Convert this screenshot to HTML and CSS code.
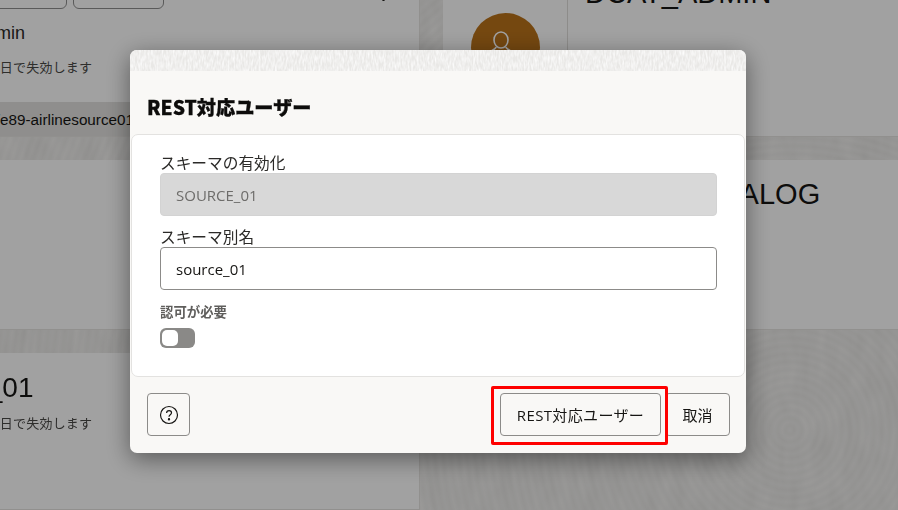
FILE: index.html
```html
<!DOCTYPE html>
<html lang="ja">
<head>
<meta charset="utf-8">
<title>REST対応ユーザー</title>
<link rel="stylesheet" href="styles.css">
</head>
<body>
<svg class="texture" width="898" height="510" aria-hidden="true">
  <filter id="page-grain" x="0" y="0" width="100%" height="100%">
    <feTurbulence type="fractalNoise" baseFrequency=".07 .03" numOctaves="2" seed="4"/>
    <feColorMatrix values="0 0 0 0 0  0 0 0 0 0  0 0 0 0 0  .06 0 0 0 -.012"/>
  </filter>
  <rect width="898" height="510" filter="url(#page-grain)"/>
</svg>
<main class="grid">
  <section class="card card-a">
    <div class="actions">
      <span class="ghost ghost-one"></span>
      <span class="ghost ghost-two"></span>
      <span class="kebab"></span>
    </div>
    <div class="name">Admin</div>
    <div class="expiry">90日で失効します</div>
    <div class="url">https://adb.example/ords/e89-airlinesource01</div>
  </section>
  <section class="card card-user">
    <div class="side">
      <span class="avatar">
        <svg viewBox="0 0 69 69" width="69" height="69" fill="none" stroke="#fff" stroke-width="1.600">
          <ellipse cx="30" cy="27" rx="7" ry="8"/>
          <path d="M25 34c0 3-9 4-11 11M35 34c0 3 9 4 11 11"/>
        </svg>
      </span>
    </div>
    <div class="title title-top">DCAT_ADMIN</div>
  </section>
  <section class="card card-plain"></section>
  <section class="card card-user">
    <div class="side"></div>
    <div class="title title-mid">DBMS_CATALOG</div>
  </section>
  <section class="card card-bottom">
    <div class="big">SOURCE_01</div>
    <div class="expiry">90日で失効します</div>
  </section>
  <div class="empty"></div>
</main>

<div class="scrim"></div>

<div class="dialog" role="dialog" aria-labelledby="dlg-title">
  <div class="dialog-strip">
    <svg width="616" height="21" aria-hidden="true">
      <filter id="strip-grain" x="0" y="0" width="100%" height="100%">
        <feTurbulence type="fractalNoise" baseFrequency=".55 .16" numOctaves="2" seed="9"/>
        <feColorMatrix values="0 0 0 0 1  0 0 0 0 1  0 0 0 0 1  1.500 0 0 0 -.45"/>
      </filter>
      <rect width="616" height="21" filter="url(#strip-grain)"/>
    </svg>
  </div>
  <h1 class="dialog-title" id="dlg-title">REST対応ユーザー</h1>
  <form class="panel">
    <label class="field-label">スキーマの有効化</label>
    <div class="input input-off">SOURCE_01</div>
    <label class="field-label field-gap">スキーマ別名</label>
    <div class="input">source_01</div>
    <div class="small-label">認可が必要</div>
    <span class="toggle"><span class="knob"></span></span>
  </form>
  <footer class="dialog-foot">
    <button class="btn btn-help" type="button" aria-label="ヘルプ">
      <svg viewBox="0 0 20 20" width="20" height="20" fill="none" stroke="#161513" stroke-width="1.200">
        <circle cx="10" cy="10" r="8.500"/>
        <path d="M7.600 8c0-1.500 1.100-2.400 2.500-2.400s2.400.9 2.400 2.200c0 1.900-2.500 1.900-2.500 3.900"/>
        <circle cx="10" cy="14.300" r=".6" fill="#161513"/>
      </svg>
    </button>
    <div class="foot-right">
      <button class="btn btn-rest" type="button">REST対応ユーザー</button>
      <button class="btn btn-cancel" type="button">取消</button>
    </div>
  </footer>
</div>

<div class="callout"></div>
</body>
</html>
```

FILE: styles.css
```css
* { box-sizing: border-box; }

html, body {
  margin: 0;
  height: 100%;
  overflow: hidden;
}

body {
  font-family: "Liberation Sans", "Noto Sans CJK JP", sans-serif;
  color: #161513;
  background-color: #f3f2f0;
  background-image:
    repeating-radial-gradient(circle at 790px 430px, rgba(0,0,0,0) 0, rgba(0,0,0,.018) 4px, rgba(0,0,0,0) 8px);
}

.texture {
  position: fixed;
  left: 0;
  top: 0;
  z-index: -1;
}

.grid {
  display: grid;
  grid-template-columns: 420px 455px;
  grid-template-rows: 237px 170px 157px;
  column-gap: 23px;
  row-gap: 23px;
  margin-top: -100px;
}

.card {
  background: #fff;
  overflow: hidden;
  border-bottom: 1px solid #e6e4e1;
}

.card-a,
.card-plain,
.card-bottom {
  border-right: 1px solid #e6e4e1;
}

.actions {
  display: flex;
  align-items: flex-end;
  height: 109px;
}

.ghost {
  display: block;
  height: 40px;
  border: 1px solid #8f8f8f;
  border-radius: 6px;
}
.ghost-one { width: 80px; margin-left: -13px; }
.ghost-two { width: 91px; margin-left: 6px; }

.kebab {
  width: 3px;
  height: 3px;
  margin: 0 0 8px 218px;
  background: #161513;
  border-radius: 50%;
}

.name {
  margin: 12px 0 0 -26px;
  font-size: 18px;
  line-height: 24px;
  color: #2b2a28;
  white-space: nowrap;
}

.expiry {
  margin: 12px 0 0 -15px;
  font-size: 13px;
  line-height: 20px;
  letter-spacing: .2px;
  color: #4a4947;
  font-family: "Noto Sans CJK JP", sans-serif;
  white-space: nowrap;
}

.url {
  display: flex;
  justify-content: flex-end;
  align-items: center;
  height: 35px;
  margin-top: 25px;
  width: 134px;
  background: #e2e1df;
  font-size: 15.250px;
  white-space: nowrap;
  overflow: hidden;
}

.card-user {
  display: flex;
}

.side {
  flex: none;
  width: 125px;
  padding: 113px 0 0 28px;
  border-right: 1px solid #e0dedb;
}

.avatar {
  display: block;
  width: 69px;
  height: 69px;
  border-radius: 50%;
  background: #b9721a;
}

.title {
  margin-left: 17px;
  font-size: 29px;
  line-height: 32px;
  white-space: nowrap;
}
.title-top { margin-top: 77px; }
.title-mid { margin-top: 18px; margin-left: 18px; }

.big {
  margin: 19px 0 0 -133px;
  font-size: 28px;
  line-height: 32px;
  white-space: nowrap;
}

.card-bottom .expiry { margin-top: 9px; }

.scrim {
  position: fixed;
  inset: 0;
  background: rgba(0, 0, 0, .37);
}

.dialog {
  position: fixed;
  left: 130px;
  top: 50px;
  width: 616px;
  height: 403px;
  display: flex;
  flex-direction: column;
  background: #f9f8f6;
  border-radius: 7px;
  box-shadow: 0 6px 24px rgba(0, 0, 0, .45);
  overflow: hidden;
}

.dialog-strip {
  flex: none;
  height: 21px;
  background-color: #e9e8e6;
}

.dialog-strip svg {
  display: block;
}

.dialog-title {
  margin: 23px 0 0 17px;
  font-family: "Noto Sans CJK JP", sans-serif;
  font-size: 19.200px;
  font-weight: 900;
  line-height: 26px;
  color: #0d0c0b;
  -webkit-text-stroke: .3px #0d0c0b;
}

.panel {
  flex: none;
  display: flex;
  flex-direction: column;
  align-items: flex-start;
  height: 243px;
  margin: 14px 1px 0 1px;
  padding: 19px 27px 0 28px;
  background: #fff;
  border: 1px solid #e3e2e0;
  border-radius: 7px;
}

.field-label {
  margin-bottom: 1px;
  font-family: "Noto Sans CJK JP", sans-serif;
  font-size: 15.700px;
  line-height: 18px;
  color: #2b2a28;
}

.field-gap { margin-top: 12px; }

.input {
  width: 557px;
  height: 43px;
  padding: 1px 15px 0;
  display: flex;
  align-items: center;
  font-family: "Open Sans", sans-serif;
  font-size: 15px;
  color: #161513;
  background: #fff;
  border: 1px solid #8c8b89;
  border-radius: 4px;
}

.input-off {
  color: #6d6c6a;
  background: #d8d8d8;
  border-color: #d3d3d3;
}

.small-label {
  margin-top: 12px;
  font-family: "Noto Sans CJK JP", sans-serif;
  font-size: 13.400px;
  font-weight: 700;
  line-height: 18px;
  color: #5f5e5c;
}

.toggle {
  display: block;
  width: 35px;
  height: 20px;
  margin-top: 8px;
  padding: 2px;
  background: #8a8987;
  border-radius: 6px;
}

.knob {
  display: block;
  width: 16px;
  height: 16px;
  background: #fff;
  border-radius: 5px;
}

.dialog-foot {
  flex: 1;
  display: flex;
  justify-content: space-between;
  align-items: flex-start;
  padding: 16px 16px 0 17px;
}

.foot-right {
  display: flex;
  gap: 4px;
}

.btn {
  height: 43px;
  padding: 0;
  display: flex;
  align-items: center;
  justify-content: center;
  font-family: "Open Sans", "Noto Sans CJK JP", sans-serif;
  font-size: 15px;
  color: #161513;
  background: #f9f8f6;
  border: 1px solid #8c8b89;
  border-radius: 4px;
}

.btn-help { width: 43px; }
.btn-rest { width: 161px; letter-spacing: .35px; }
.btn-cancel { width: 65px; }

.callout {
  position: fixed;
  left: 491px;
  top: 386px;
  width: 177px;
  height: 59px;
  border: 3px solid #fe0000;
  border-radius: 2px;
}
```
